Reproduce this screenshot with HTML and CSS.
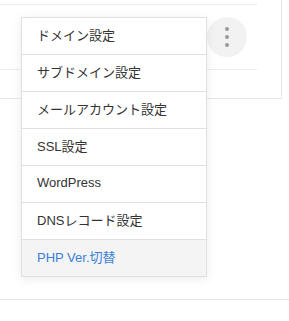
FILE: index.html
```html
<!DOCTYPE html>
<html lang="ja">
<head>
  <meta charset="UTF-8">
  <meta name="viewport" content="width=device-width, initial-scale=1.0">
  <title>Server Panel - Menu</title>
  <link rel="stylesheet" href="styles.css">
</head>
<body>
  <div class="card">
    <div class="row row-top"></div>
    <div class="row row-domain">
      <button class="kebab" aria-label="menu">
        <span></span><span></span><span></span>
      </button>
    </div>
  </div>

  <div class="section"></div>

  <ul class="menu">
    <li><a href="#">ドメイン設定</a></li>
    <li><a href="#">サブドメイン設定</a></li>
    <li><a href="#">メールアカウント設定</a></li>
    <li><a href="#">SSL設定</a></li>
    <li><a href="#">WordPress</a></li>
    <li><a href="#">DNSレコード設定</a></li>
    <li class="active"><a href="#">PHP Ver.切替</a></li>
  </ul>
</body>
</html>
```

FILE: styles.css
```css
body {
  margin: 0;
  font-family: "Liberation Sans", "Noto Sans CJK JP", sans-serif;
  background: #fff;
  position: relative;
  width: 289px;
  height: 321px;
  overflow: hidden;
}
.card {
  width: 281px;
  height: 98px;
  border-right: 1px solid #e8e8e8;
  border-bottom: 1px solid #e8e8e8;
  background: #fff;
}
.row {
  width: 257px;
  border-bottom: 1px solid #ececec;
}
.row-top {
  height: 4px;
}
.row-domain {
  height: 64px;
  display: flex;
  align-items: center;
  justify-content: flex-end;
}
.kebab {
  width: 40px;
  height: 40px;
  margin-right: 10px;
  border: none;
  border-radius: 50%;
  background: #f2f2f2;
  display: flex;
  flex-direction: column;
  align-items: center;
  justify-content: center;
  gap: 4px;
  padding: 0;
  cursor: pointer;
}
.kebab span {
  width: 4px;
  height: 4px;
  border-radius: 50%;
  background: #9a9a9a;
}
.section {
  margin-top: 200px;
  border-top: 1px solid #e6e6e6;
}
.menu {
  position: absolute;
  left: 21px;
  top: 17px;
  width: 184px;
  margin: 0;
  padding: 0;
  list-style: none;
  background: #fff;
  border: 1px solid #e0e0e0;
  border-bottom: none;
  box-shadow: 0 2px 10px rgba(0,0,0,0.08);
}
.menu li {
  height: 36px;
  border-bottom: 1px solid #e0e0e0;
}
.menu a {
  display: flex;
  align-items: center;
  box-sizing: border-box;
  height: 100%;
  padding: 0 0 3px 15px;
  color: #333;
  font-size: 13px;
  text-decoration: none;
}
.menu li.active {
  background: #f4f4f4;
}
.menu li.active a {
  color: #3b7fd9;
}
```
